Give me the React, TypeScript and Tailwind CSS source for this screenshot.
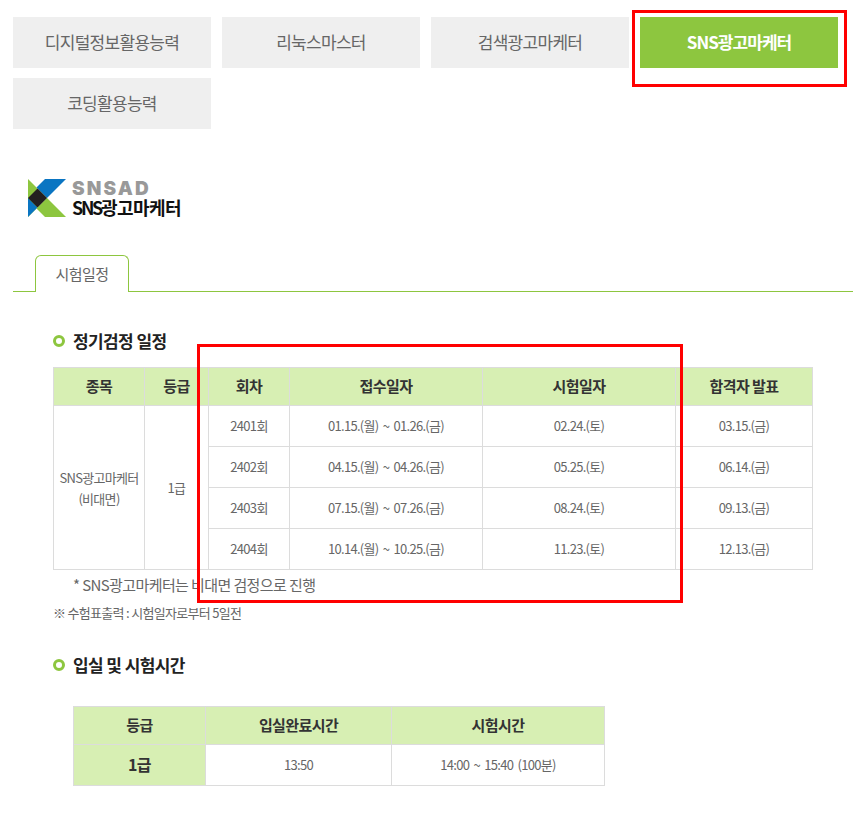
const tabs = ['디지털정보활용능력', '리눅스마스터', '검색광고마케터', 'SNS광고마케터', '코딩활용능력'];

const rounds = [
  ['2401회', '01.15.(월) ~ 01.26.(금)', '02.24.(토)', '03.15.(금)'],
  ['2402회', '04.15.(월) ~ 04.26.(금)', '05.25.(토)', '06.14.(금)'],
  ['2403회', '07.15.(월) ~ 07.26.(금)', '08.24.(토)', '09.13.(금)'],
  ['2404회', '10.14.(월) ~ 10.25.(금)', '11.23.(토)', '12.13.(금)'],
];

const th = 'border border-[#dcdcdc] bg-[#d7efb3] text-[15px] font-bold text-[#333] tracking-[-0.6px]';
const td = 'border border-[#dcdcdc] text-[13px] text-[#666] tracking-[-0.7px] [word-spacing:2px] text-center';

function SectionTitle({ children }: { children: string }) {
  return (
    <h2 className="flex items-center gap-[8px] text-[17px] font-bold leading-[24px] tracking-[-0.6px] text-[#222]">
      <span className="h-[12px] w-[12px] rounded-full border-[3px] border-[#8dc63f]" />
      {children}
    </h2>
  );
}

function LogoMark() {
  return (
    <svg width="38" height="38" viewBox="0 0 38 38" className="shrink-0">
      <polygon points="0,0 19,19 0,38" fill="#8dc63f" />
      <polygon points="17,0 38,0 19,19 8.5,8.5" fill="#0a75c2" />
      <polygon points="0,19 9.5,28.5 0,38" fill="#0a75c2" />
      <polygon points="8.5,29.5 19,19 38,38 17,38" fill="#8dc63f" />
      <polygon points="0,19 9.5,9.5 19,19 9.5,28.5" fill="#231f20" />
    </svg>
  );
}

export default function App() {
  return (
    <div className="relative h-[836px] w-[857px] overflow-hidden bg-white font-['Noto_Sans_CJK_KR','Noto_Sans',sans-serif] text-[#444]">
      <div className="grid w-[825px] grid-cols-[repeat(4,198px)] gap-x-[11px] gap-y-[10px] pl-[13px] pt-[17px]">
        {tabs.map((tab) => (
          <div
            key={tab}
            className={
              tab === 'SNS광고마케터'
                ? 'flex h-[51px] items-center justify-center bg-[#8dc63f] pb-[2px] text-[17px] font-bold tracking-[-0.95px] text-white'
                : 'flex h-[51px] items-center justify-center bg-[#efefef] pb-[2px] text-[17px] tracking-[-0.7px] text-[#666]'
            }
          >
            {tab}
          </div>
        ))}
      </div>

      <div className="ml-[28px] mt-[50px] flex h-[38px] items-center gap-[6px]">
        <LogoMark />
        <div className="flex flex-col">
          <span className="font-['Inter',sans-serif] text-[19px] font-black leading-[17px] tracking-[2.1px] text-[#999]">
            SNSAD
          </span>
          <span className="mt-[1px] text-[18px] font-bold leading-[19px] tracking-[-0.6px] text-[#111]">
            <span className="tracking-[-2.3px]">SNS</span>광고마케터
          </span>
        </div>
      </div>

      <div className="mx-[13px] mt-[37px] w-[840px] border-b border-[#8dc63f] pl-[22px]">
        <div className="relative top-px flex h-[37px] w-[94px] items-center justify-center rounded-t-[6px] border border-b-0 border-[#8dc63f] bg-white text-[15px] tracking-[-0.6px] text-[#666]">
          시험일정
        </div>
      </div>

      <div className="ml-[53px] mt-[37px]">
        <SectionTitle>정기검정 일정</SectionTitle>
      </div>

      <table className="ml-[53px] mt-[14px] w-[759px] table-fixed border-collapse">
        <colgroup>
          <col className="w-[91px]" />
          <col className="w-[64px]" />
          <col className="w-[81px]" />
          <col className="w-[193px]" />
          <col className="w-[193px]" />
          <col className="w-[137px]" />
        </colgroup>
        <thead>
          <tr className="h-[38px]">
            <th className={th}>종목</th>
            <th className={th}>등급</th>
            <th className={th}>회차</th>
            <th className={th}>접수일자</th>
            <th className={th}>시험일자</th>
            <th className={th}>합격자 발표</th>
          </tr>
        </thead>
        <tbody>
          {rounds.map((row, i) => (
            <tr key={row[0]} className="h-[41px]">
              {i === 0 && (
                <>
                  <td rowSpan={4} className={`${td} leading-[21px]`}>
                    SNS광고마케터
                    <br />
                    (비대면)
                  </td>
                  <td rowSpan={4} className={td}>
                    1급
                  </td>
                </>
              )}
              {row.map((cell) => (
                <td key={cell} className={td}>
                  {cell}
                </td>
              ))}
            </tr>
          ))}
        </tbody>
      </table>

      <p className="ml-[73px] mt-[4px] text-[15px] leading-[22px] tracking-[-0.6px] text-[#666]">
        * SNS광고마케터는 비대면 검정으로 진행
      </p>
      <p className="ml-[53px] mt-[8px] text-[13px] leading-[18px] tracking-[-0.7px] text-[#666]">
        ※ 수험표출력 : 시험일자로부터 5일전
      </p>

      <div className="ml-[53px] mt-[31px]">
        <SectionTitle>입실 및 시험시간</SectionTitle>
      </div>

      <table className="ml-[73px] mt-[29px] w-[531px] table-fixed border-collapse">
        <colgroup>
          <col className="w-[132px]" />
          <col className="w-[186px]" />
          <col className="w-[213px]" />
        </colgroup>
        <thead>
          <tr className="h-[38px]">
            <th className={th}>등급</th>
            <th className={th}>입실완료시간</th>
            <th className={th}>시험시간</th>
          </tr>
        </thead>
        <tbody>
          <tr className="h-[41px]">
            <th className={`${th} pb-[3px] text-[16px]`}>1급</th>
            <td className={td}>13:50</td>
            <td className={td}>14:00 ~ 15:40 (100분)</td>
          </tr>
        </tbody>
      </table>

      {/* red annotation boxes */}
      <div className="absolute left-[632px] top-[10px] h-[77px] w-[215px] border-[3px] border-[#f00]" />
      <div className="absolute left-[197px] top-[344px] h-[259px] w-[486px] border-[3px] border-[#f00]" />
    </div>
  );
}
